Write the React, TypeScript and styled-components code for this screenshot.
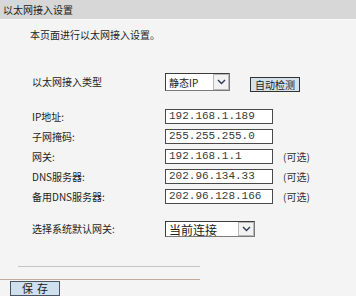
import styled, { createGlobalStyle } from "styled-components";

const GlobalStyle = createGlobalStyle`
  html, body {
    margin: 0;
    padding: 0;
    background: #f4f4f4;
  }
  body {
    font-family: "Noto Sans CJK SC", "Noto Sans", sans-serif;
    color: #1e1e1e;
  }
`;

const Page = styled.div`
  width: 356px;
  height: 296px;
  overflow: hidden;
  background: #f4f4f4;
  display: flex;
  flex-direction: column;
`;

const Header = styled.div`
  height: 19px;
  line-height: 19px;
  background: #d7d7d7;
  border-bottom: 1px solid #fbfbfb;
  padding-left: 3px;
  font-size: 10px;
  color: #222;
`;

const Intro = styled.div`
  margin-top: 8px;
  padding-left: 30px;
  font-size: 10px;
  line-height: 14px;
`;

const Form = styled.div`
  padding-left: 32px;
  display: flex;
  flex-direction: column;
`;

const Row = styled.div<{ $top?: number; $h: number }>`
  display: flex;
  align-items: center;
  height: ${(p) => p.$h}px;
  margin-top: ${(p) => p.$top ?? 5}px;
`;

const Label = styled.div`
  width: 133px;
  font-size: 10px;
  line-height: 14px;
  white-space: nowrap;
`;

const TextField = styled.div`
  box-sizing: border-box;
  width: 108px;
  height: 15px;
  background: #fff;
  border: 1px solid #4a4a4a;
  padding-left: 3px;
  font-family: "Liberation Mono", monospace;
  font-size: 11px;
  line-height: 13px;
  color: #3a3a3a;
`;

const Hint = styled.span`
  margin-left: 10px;
  font-size: 10px;
  color: #333;
`;

const Select = styled.div<{ $w: number; $h: number; $fs: number }>`
  box-sizing: border-box;
  width: ${(p) => p.$w}px;
  height: ${(p) => p.$h}px;
  background: #fff;
  border: 1px solid #7a7a7a;
  border-left-color: #3c3c3c;
  border-top-color: #3c3c3c;
  display: flex;
  align-items: center;
  justify-content: space-between;
  padding-left: 3px;
  font-size: ${(p) => p.$fs}px;
  color: #222;
`;

const ArrowBox = styled.div`
  box-sizing: border-box;
  width: 16px;
  height: 100%;
  border: 1px solid #b8b8b8;
  background: #f2f2f2;
  display: flex;
  align-items: center;
  justify-content: center;
`;

const DetectButton = styled.div`
  box-sizing: border-box;
  margin-left: 20px;
  margin-top: 4px;
  width: 50px;
  height: 15px;
  background: #d4e0ea;
  border: 1px solid #333;
  font-size: 10px;
  line-height: 13px;
  text-align: center;
  color: #1a1a1a;
`;

const Rule = styled.div<{ $left: number; $top: number; $color: string }>`
  margin-left: ${(p) => p.$left}px;
  margin-top: ${(p) => p.$top}px;
  width: ${(p) => 200 - p.$left}px;
  height: 1px;
  background: ${(p) => p.$color};
`;

const SaveButton = styled.div`
  box-sizing: border-box;
  margin-left: 10px;
  margin-top: 2px;
  width: 50px;
  height: 15px;
  background: #cfe0ef;
  border: 1px solid #4a5560;
  font-size: 11px;
  line-height: 13px;
  text-align: center;
  letter-spacing: 4px;
  padding-left: 4px;
  color: #1a1a1a;
`;

const Chevron = () => (
  <svg width="9" height="6" viewBox="0 0 9 6">
    <path d="M1 1 L4.5 4.5 L8 1" fill="none" stroke="#2b3a55" strokeWidth="1.4" />
  </svg>
);

const fields = [
  { label: "IP地址:", value: "192.168.1.189", optional: false },
  { label: "子网掩码:", value: "255.255.255.0", optional: false },
  { label: "网关:", value: "192.168.1.1", optional: true },
  { label: "DNS服务器:", value: "202.96.134.33", optional: true },
  { label: "备用DNS服务器:", value: "202.96.128.166", optional: true },
];

export default function App() {
  return (
    <>
      <GlobalStyle />
      <Page>
        <Header>以太网接入设置</Header>
        <Intro>本页面进行以太网接入设置。</Intro>
        <Form>
          <Row $top={31} $h={18}>
            <Label>以太网接入类型</Label>
            <Select $w={65} $h={18} $fs={10}>
              静态IP
              <ArrowBox>
                <Chevron />
              </ArrowBox>
            </Select>
            <DetectButton>自动检测</DetectButton>
          </Row>
          {fields.map((f, i) => (
            <Row key={f.label} $top={i === 0 ? 18 : 5} $h={15}>
              <Label>{f.label}</Label>
              <TextField>{f.value}</TextField>
              {f.optional && <Hint>(可选)</Hint>}
            </Row>
          ))}
          <Row $top={17} $h={16}>
            <Label>选择系统默认网关:</Label>
            <Select $w={90} $h={16} $fs={12}>
              当前连接
              <ArrowBox>
                <Chevron />
              </ArrowBox>
            </Select>
          </Row>
        </Form>
        <Rule $left={18} $top={29} $color="#c4c4c4" />
        <Rule $left={0} $top={12} $color="#bfaaa0" />
        <SaveButton>保存</SaveButton>
      </Page>
    </>
  );
}
